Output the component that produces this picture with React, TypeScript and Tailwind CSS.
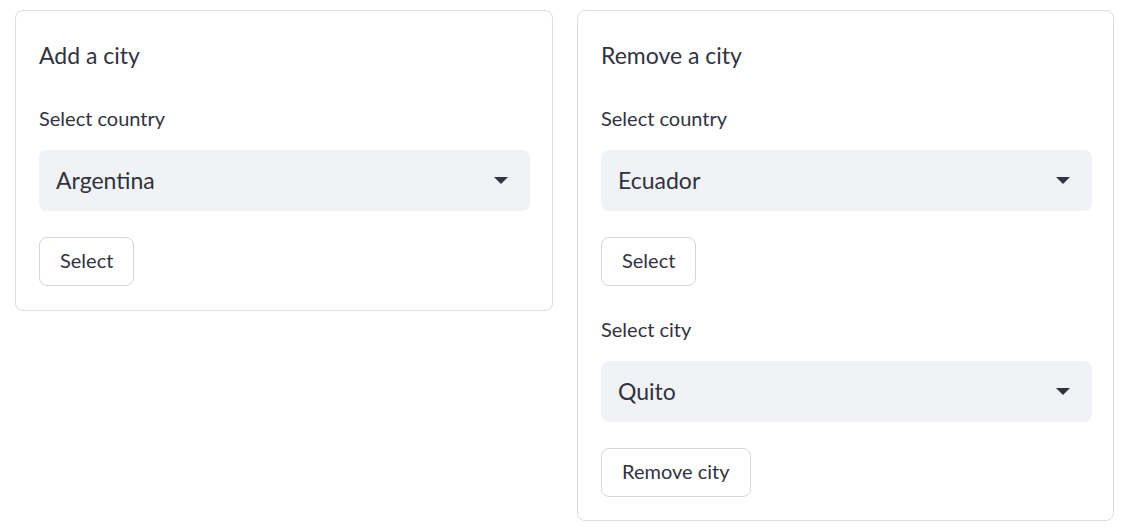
import React from "react";

function Arrow() {
  return (
    <svg width="14" height="8" viewBox="0 0 14 8" className="shrink-0">
      <path d="M0 0 L14 0 L7 7 Z" fill="#31333f" />
    </svg>
  );
}

function Field({ label, value }: { label: string; value: string }) {
  return (
    <div className="flex flex-col">
      <div className="h-[26px] leading-[24px] text-[20px] mb-[18px]">{label}</div>
      <div className="h-[61px] rounded-lg bg-[#f0f2f6] flex items-center justify-between pl-[17px] pr-[22px]">
        <span className="text-[23px]">{value}</span>
        <Arrow />
      </div>
    </div>
  );
}

function Btn({ children }: { children: React.ReactNode }) {
  return (
    <div className="flex">
      <button className="h-[49px] px-[20px] pb-[3px] rounded-lg border border-[#d6d6d9] bg-white text-[20px] text-[#31333f]">
        {children}
      </button>
    </div>
  );
}

export default function App() {
  return (
    <div
      className="w-[1145px] h-[531px] bg-white text-[#31333f] flex items-start gap-[24px] pl-[15px] pt-[10px]"
      style={{ fontFamily: "Lato, 'Noto Sans', sans-serif" }}
    >
      <div className="w-[538px] border border-[#dcdde0] rounded-lg pl-[23px] pr-[22px] pt-[30px] pb-[24px] flex flex-col">
        <div className="h-[30px] leading-[28px] text-[23px] mb-[35px]">Add a city</div>
        <Field label="Select country" value="Argentina" />
        <div className="h-[26px]" />
        <Btn>Select</Btn>
      </div>
      <div className="w-[537px] border border-[#dcdde0] rounded-lg pl-[23px] pr-[21px] pt-[30px] pb-[23px] flex flex-col">
        <div className="h-[30px] leading-[28px] text-[23px] mb-[35px]">Remove a city</div>
        <Field label="Select country" value="Ecuador" />
        <div className="h-[26px]" />
        <Btn>Select</Btn>
        <div className="h-[31px]" />
        <Field label="Select city" value="Quito" />
        <div className="h-[26px]" />
        <Btn>Remove city</Btn>
      </div>
    </div>
  );
}
